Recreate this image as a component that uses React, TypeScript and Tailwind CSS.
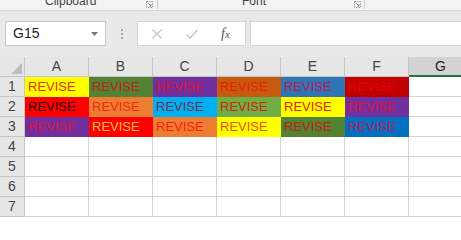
import React from "react";

const cols = ["A", "B", "C", "D", "E", "F", "G"];

// [background, text colour] per cell, rows 1-3, columns A-F
const filled: [string, string][][] = [
  [
    ["bg-[#ffff00]", "text-[#e8300c]"],
    ["bg-[#548235]", "text-[#c0200c]"],
    ["bg-[#7030a0]", "text-[#e0102a]"],
    ["bg-[#c55a11]", "text-[#f01808]"],
    ["bg-[#2e75b6]", "text-[#c0184a]"],
    ["bg-[#c00000]", "text-[#e80000]"],
  ],
  [
    ["bg-[#ff0000]", "text-[#2a0000]"],
    ["bg-[#ed7d31]", "text-[#f02a10]"],
    ["bg-[#00b0f0]", "text-[#70305a]"],
    ["bg-[#70ad47]", "text-[#c8280c]"],
    ["bg-[#ffff00]", "text-[#e8200c]"],
    ["bg-[#7030a0]", "text-[#e0103a]"],
  ],
  [
    ["bg-[#7030a0]", "text-[#e0103a]"],
    ["bg-[#ff0000]", "text-[#ffc040]"],
    ["bg-[#ed7d31]", "text-[#f81c10]"],
    ["bg-[#ffff00]", "text-[#e85008]"],
    ["bg-[#548235]", "text-[#c0200c]"],
    ["bg-[#0070c0]", "text-[#c0185a]"],
  ],
];

function Launcher() {
  return (
    <svg width="7" height="7" viewBox="0 0 7 7" className="text-[#888]">
      <path d="M0.5 0.5h6v6h-6z" fill="none" stroke="currentColor" strokeWidth="0.8" strokeDasharray="1.5 1" />
      <path d="M2 2l3 3M5 3v2H3" fill="none" stroke="currentColor" strokeWidth="0.9" />
    </svg>
  );
}

function Ribbon() {
  return (
    <div className="h-[11px] bg-[#f3f3f3] border-b border-[#d6d6d6] relative overflow-hidden text-[12px] text-[#444] leading-none">
      <span className="absolute left-[45px] top-[-5px]">Clipboard</span>
      <span className="absolute left-[146px] top-[1px]"><Launcher /></span>
      <span className="absolute left-[157px] top-0 h-[9px] w-px bg-[#d0d0d0]" />
      <span className="absolute left-[242px] top-[-5px]">Font</span>
      <span className="absolute left-[354px] top-[1px]"><Launcher /></span>
      <span className="absolute left-[364px] top-0 h-[9px] w-px bg-[#d0d0d0]" />
    </div>
  );
}

function FormulaBar() {
  return (
    <div className="h-[46px] bg-[#e9e9e9] flex items-start pt-[10px] pl-[5px]">
      <div className="w-[101px] h-[25px] bg-white border border-[#c6c6c6] flex items-center pl-[7px] pr-[7px] justify-between">
        <span className="text-[14px] text-[#222]">G15</span>
        <svg width="7" height="4" viewBox="0 0 7 4">
          <path d="M0 0h7L3.5 4z" fill="#7a7a7a" />
        </svg>
      </div>
      <div className="w-[31px] h-[25px] flex flex-col items-center justify-center gap-[2px]">
        <span className="w-[2px] h-[2px] bg-[#a8a8a8]" />
        <span className="w-[2px] h-[2px] bg-[#a8a8a8]" />
        <span className="w-[2px] h-[2px] bg-[#a8a8a8]" />
      </div>
      <div className="w-[109px] h-[25px] bg-white border border-[#d4d4d4] flex items-center">
        <svg width="12" height="12" viewBox="0 0 12 12" className="ml-[13px]">
          <path d="M1.5 1.5l9 9M10.5 1.5l-9 9" stroke="#c4c4c4" strokeWidth="1.3" />
        </svg>
        <svg width="14" height="12" viewBox="0 0 14 12" className="ml-[22px]">
          <path d="M1.5 6.5l3.5 3.5 7.5-8" fill="none" stroke="#c4c4c4" strokeWidth="1.4" />
        </svg>
        <span className="ml-[22px] text-[14px] italic text-[#555] leading-none" style={{ fontFamily: '"Liberation Serif", serif' }}>
          f<span className="text-[11px]">x</span>
        </span>
      </div>
      <div className="ml-[4px] flex-1 h-[25px] bg-white border border-[#d4d4d4] border-r-0" />
    </div>
  );
}

function Grid() {
  const rows = [1, 2, 3, 4, 5, 6, 7];
  return (
    <div className="grid grid-cols-[25px_repeat(7,64px)] auto-rows-[20px] text-[14px]">
      <div className="bg-[#e6e6e6] border-r border-b border-[#c6c6c6] relative">
        <svg width="11" height="11" viewBox="0 0 11 11" className="absolute right-[2px] bottom-[2px]">
          <path d="M11 0v11H0z" fill="#bdbdbd" />
        </svg>
      </div>
      {cols.map((c) => (
        <div
          key={c}
          className={
            c === "G"
              ? "bg-[#d3d3d3] border-r border-[#c6c6c6] border-b-2 border-b-[#217346] flex items-center justify-center text-[#262626]"
              : "bg-[#e6e6e6] border-r border-b border-[#c6c6c6] flex items-center justify-center text-[#444]"
          }
        >
          {c}
        </div>
      ))}
      {rows.map((r) => (
        <React.Fragment key={r}>
          <div className="bg-[#e6e6e6] border-r border-b border-[#c6c6c6] flex items-center justify-center text-[#444]">
            {r}
          </div>
          {cols.map((c, i) => {
            const cell = r <= 3 && i < 6 ? filled[r - 1][i] : null;
            return cell ? (
              <div
                key={c}
                className={`${cell[0]} ${cell[1]} border-r border-b border-transparent flex items-center pl-[3px] text-[13px]`}
              >
                REVISE
              </div>
            ) : (
              <div key={c} className="bg-white border-r border-b border-[#d4d4d4]" />
            );
          })}
        </React.Fragment>
      ))}
    </div>
  );
}

export default function App() {
  return (
    <div className="w-[461px] h-[217px] overflow-hidden bg-white" style={{ fontFamily: '"Liberation Sans", Arial, sans-serif' }}>
      <Ribbon />
      <FormulaBar />
      <Grid />
    </div>
  );
}
